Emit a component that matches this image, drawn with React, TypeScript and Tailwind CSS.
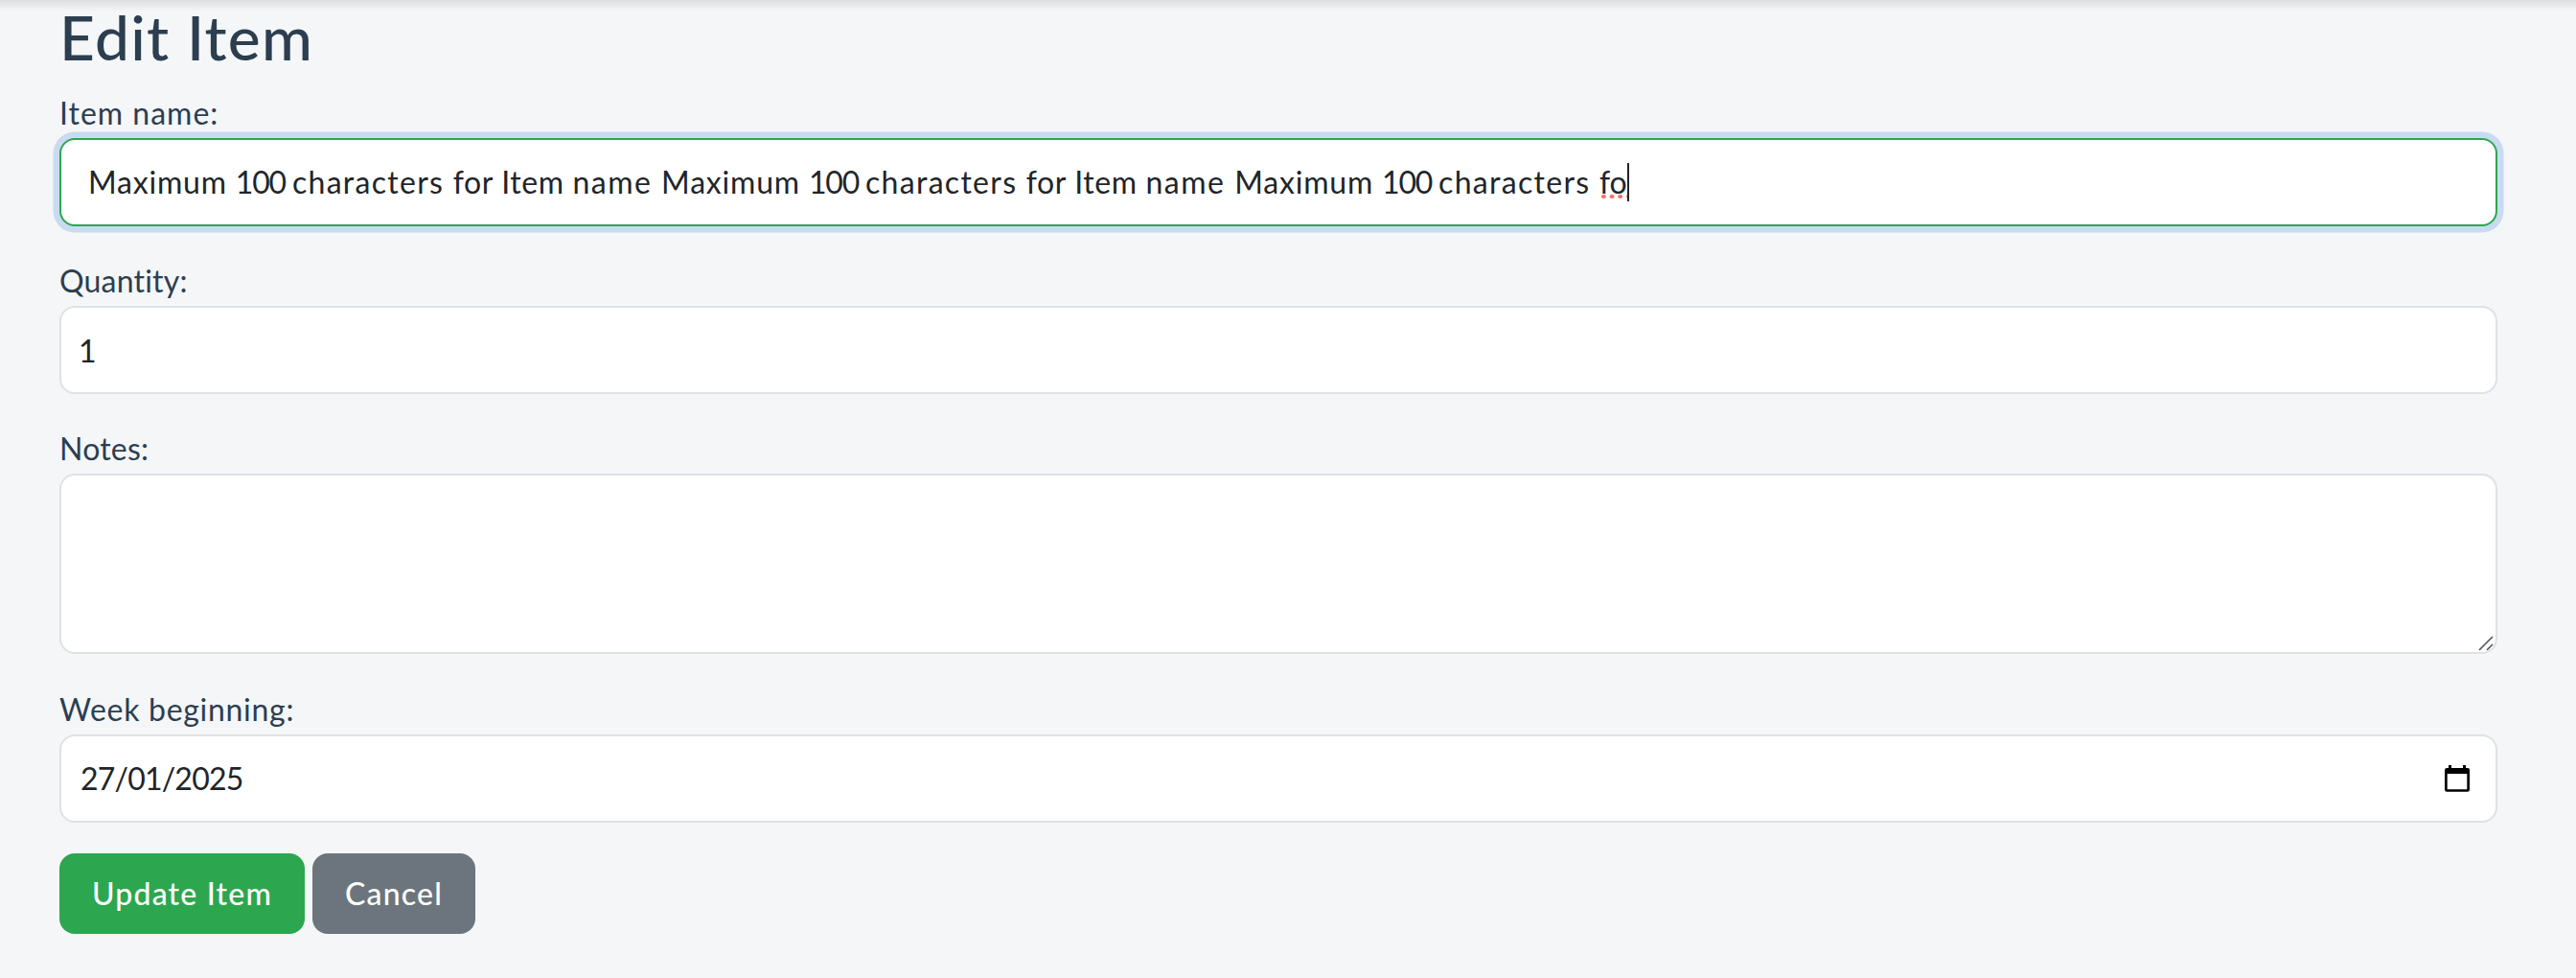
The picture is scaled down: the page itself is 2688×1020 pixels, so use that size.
import type { ReactNode } from "react";

function Field({ label, tracking, children }: { label: string; tracking: string; children: ReactNode }) {
  return (
    <div className="flex flex-col">
      <label className={`h-[50px] text-[32px] leading-[48px] ${tracking}`}>{label}</label>
      {children}
    </div>
  );
}

const control =
  "flex h-[92px] w-full items-center rounded-2xl border-2 bg-white text-[32px] leading-[48px] text-[#212529] outline-none";

function Phrase() {
  return (
    <>
      <span className="tracking-[0.8px]">Maximum </span>
      <span className="tracking-[-1.2px]">100 </span>
      <span className="tracking-[1.3px]">characters </span>
      <span className="tracking-[0.6px]">for </span>
      <span className="tracking-[0.6px]">Item </span>
      <span className="tracking-[1.5px]">name </span>
    </>
  );
}

function CalendarIcon() {
  return (
    <svg className="h-7 w-[26px]" viewBox="0 0 26 28" aria-hidden="true">
      <path
        fillRule="evenodd"
        d="M4 0h3v3h12V0h3v3h1.5A2.2 2.2 0 0 1 26 5.2v20.4a2.2 2.2 0 0 1-2.2 2.2H2.2A2.2 2.2 0 0 1 0 25.6V5.2A2.2 2.2 0 0 1 2.2 3H4zM2.7 9v16.2h20.6V9z"
      />
    </svg>
  );
}

export default function App() {
  return (
    <main className="relative h-[1020px] w-full bg-[#f4f6f8] pr-[82px] pl-[62px] font-['Lato',sans-serif] text-[#2c3e50]">
      <div className="absolute inset-x-0 top-0 h-3 bg-linear-to-b from-black/10 to-transparent" />
      <h1 className="mb-[17px] text-[64px] leading-[77px] font-medium tracking-[1.3px]">Edit Item</h1>
      <form className="flex flex-col" onSubmit={(e) => e.preventDefault()}>
        <div className="flex flex-col gap-[33px]">
          <Field label="Item name:" tracking="tracking-[1px]">
            <div className={`${control} border-[#2da650] pl-7 whitespace-pre shadow-[0_0_0_6.5px_#c8dbf0]`}>
              <Phrase />
              <Phrase />
              <span className="tracking-[0.8px]">Maximum </span>
              <span className="tracking-[-1.2px]">100 </span>
              <span className="tracking-[1.3px]">characters </span>
              <span className="relative">
                fo
                <span className="absolute bottom-[7px] left-0 h-1 w-full bg-[radial-gradient(circle,#ff6f6a_2px,transparent_2.5px)] bg-size-[8.67px_4px]" />
              </span>
              <span className="h-10 w-0.5 bg-[#212529]" />
            </div>
          </Field>
          <Field label="Quantity:" tracking="tracking-[0.2px]">
            <input className={`${control} border-[#dee2e6] pl-[18px]`} defaultValue="1" />
          </Field>
          <Field label="Notes:" tracking="tracking-[0.2px]">
            <div className="relative h-[188px]">
              <textarea className="block h-full w-full resize-none rounded-2xl border-2 border-[#dee2e6] bg-white p-5 text-[32px] outline-none" />
              <svg className="absolute right-1 bottom-[3px] h-4 w-4" viewBox="0 0 16 16" fill="none" stroke="#555" strokeWidth="1.6">
                <path d="M1 15 15 1M9 15l6-6" />
              </svg>
            </div>
          </Field>
        </div>
        <div className="mt-[34px]">
          <Field label="Week beginning:" tracking="tracking-[0.7px]">
            <div className={`${control} justify-between border-[#dee2e6] pr-[27px] pl-5 tracking-[-0.8px]`}>
              27/01/2025
              <CalendarIcon />
            </div>
          </Field>
        </div>
        <div className="mt-8 flex gap-2 text-[32px] font-medium text-white">
          <button className="h-[84px] w-64 rounded-2xl bg-[#2da650] tracking-[1.2px]">Update Item</button>
          <button className="h-[84px] w-[170px] rounded-2xl bg-[#6c757d] tracking-[1.2px]">Cancel</button>
        </div>
      </form>
    </main>
  );
}
